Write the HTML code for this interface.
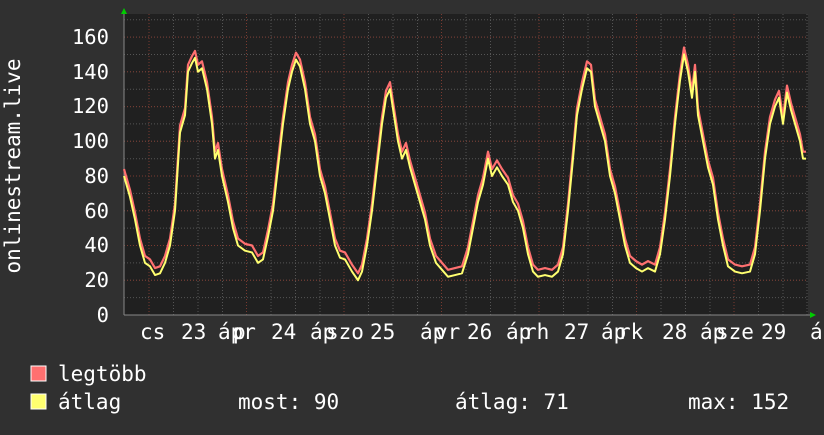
<!DOCTYPE html>
<html><head><meta charset="utf-8"><style>
body{margin:0;background:#303030;width:824px;height:430px;overflow:hidden}
svg text{font-family:"DejaVu Sans Mono","Liberation Mono",monospace;fill:#fff}
</style></head><body>
<svg width="824" height="430" xmlns="http://www.w3.org/2000/svg">
<rect width="824" height="430" fill="#303030"/>
<rect x="124" y="14" width="684" height="301" fill="#202020"/>
<g id="grid" stroke-width="1" stroke-dasharray="1,2">
<g stroke="#555">
<path d="M124 297.6H808M124 280.25H808M124 262.9H808M124 245.5H808M124 228.1H808M124 210.8H808M124 193.4H808M124 176H808M124 158.7H808M124 141.3H808M124 123.9H808M124 106.6H808M124 89.2H808M124 71.8H808M124 54.5H808M124 37.1H808M124 19.7H808"/>
<path d="M173.5 14V315M198 14V315M222.5 14V315M271 14V315M295.5 14V315M320 14V315M368.5 14V315M393 14V315M417.5 14V315M466 14V315M490.5 14V315M515 14V315M563.5 14V315M588 14V315M612.5 14V315M661 14V315M685.5 14V315M710 14V315M758.5 14V315M783 14V315M807 14V315"/>
</g>
<g stroke="#7a3a30">
<path d="M124 280.25H808M124 245.5H808M124 210.8H808M124 176H808M124 141.3H808M124 106.6H808M124 71.8H808M124 37.1H808"/>
<path d="M149 14V315M246.5 14V315M344 14V315M441.5 14V315M539 14V315M636.5 14V315M734 14V315"/>
</g>
</g>
<line x1="124" y1="315" x2="810" y2="315" stroke="#888"/>
<line x1="124" y1="12" x2="124" y2="315" stroke="#888"/>
<polygon points="121,14 127,14 124,8" fill="#0c0"/>
<polygon points="810,312 810,318 816,315" fill="#0c0"/>
<g transform="translate(0,315) scale(1,-1.7375)" fill="none" stroke-linejoin="round">
<polyline transform="translate(0,4)" vector-effect="non-scaling-stroke" stroke="#ff7070" stroke-width="2.2" points="124,80 130,68 135,55 140,40 145,30 150,28 155,23 160,24 165,30 170,40 175,60 180,105 185,115 188,140 192,145 195,148 198,140 202,142 207,130 212,110 215,90 218,95 222,80 228,65 233,50 238,40 245,37 252,36 258,30 263,32 268,45 273,60 278,85 283,110 288,130 292,140 296,147 300,143 305,130 310,110 315,100 320,80 325,70 330,55 335,40 340,33 345,32 352,25 358,20 362,25 367,40 372,60 377,85 382,110 386,125 390,130 394,115 398,100 402,90 406,95 410,85 415,75 420,65 425,55 430,40 436,30 442,26 448,22 455,23 462,24 468,35 473,50 478,65 483,75 488,90 492,80 497,85 502,80 508,75 513,65 518,60 523,50 528,35 533,25 538,22 545,23 552,22 558,25 563,35 568,60 573,90 577,115 582,130 587,142 591,140 595,120 600,110 605,100 610,80 615,70 620,55 625,40 630,30 636,27 642,25 648,27 655,25 660,35 665,55 670,80 675,110 680,135 684,150 688,140 692,125 695,140 698,115 703,100 708,85 713,75 718,55 723,40 728,28 735,25 742,24 750,25 755,35 760,60 765,90 770,110 775,120 779,125 783,110 787,128 791,118 795,110 800,100 803,90 806,90"/>
<polyline vector-effect="non-scaling-stroke" stroke="#ffff70" stroke-width="2" points="124,80 130,68 135,55 140,40 145,30 150,28 155,23 160,24 165,30 170,40 175,60 180,105 185,115 188,140 192,145 195,148 198,140 202,142 207,130 212,110 215,90 218,95 222,80 228,65 233,50 238,40 245,37 252,36 258,30 263,32 268,45 273,60 278,85 283,110 288,130 292,140 296,147 300,143 305,130 310,110 315,100 320,80 325,70 330,55 335,40 340,33 345,32 352,25 358,20 362,25 367,40 372,60 377,85 382,110 386,125 390,130 394,115 398,100 402,90 406,95 410,85 415,75 420,65 425,55 430,40 436,30 442,26 448,22 455,23 462,24 468,35 473,50 478,65 483,75 488,90 492,80 497,85 502,80 508,75 513,65 518,60 523,50 528,35 533,25 538,22 545,23 552,22 558,25 563,35 568,60 573,90 577,115 582,130 587,142 591,140 595,120 600,110 605,100 610,80 615,70 620,55 625,40 630,30 636,27 642,25 648,27 655,25 660,35 665,55 670,80 675,110 680,135 684,150 688,140 692,125 695,140 698,115 703,100 708,85 713,75 718,55 723,40 728,28 735,25 742,24 750,25 755,35 760,60 765,90 770,110 775,120 779,125 783,110 787,128 791,118 795,110 800,100 803,90 806,90"/>
</g>
<g font-size="20.5" text-anchor="end">
<text x="109" y="322">0</text><text x="109" y="287">20</text><text x="109" y="252">40</text><text x="109" y="218">60</text><text x="109" y="183">80</text><text x="109" y="148">100</text><text x="109" y="113">120</text><text x="109" y="79">140</text><text x="109" y="44">160</text>
</g>
<text transform="translate(20,166) rotate(-90)" font-size="21" text-anchor="middle">onlinestream.live</text>
<g font-size="21">
<text x="140" y="339">cs</text><text x="181" y="339">23</text><text x="218" y="339">ápr</text><text x="233" y="339">p</text>
<text x="271" y="339">24</text><text x="310" y="339">áp</text><text x="326" y="339">szo</text>
<text x="370" y="339">25</text><text x="420" y="339">áp</text><text x="435" y="339">vr</text>
<text x="467" y="339">26</text><text x="506" y="339">áp</text><text x="524" y="339">rh</text>
<text x="564" y="339">27</text><text x="601" y="339">áp</text><text x="618" y="339">rk</text>
<text x="662" y="339">28</text><text x="700" y="339">áp</text><text x="716" y="339">sze</text>
<text x="761" y="339">29</text><text x="810" y="339">á</text>
</g>
<rect x="31" y="366" width="15" height="15" fill="#ff7070" stroke="#fff" stroke-width="1"/>
<rect x="31" y="394" width="15" height="15" fill="#ffff70" stroke="#fff" stroke-width="1"/>
<g font-size="21">
<text x="58" y="381">legtöbb</text>
<text x="58" y="409">átlag</text>
<text x="238" y="409">most: 90</text>
<text x="455" y="409">átlag: 71</text>
<text x="688" y="409">max: 152</text>
</g>
</svg>
</body></html>
